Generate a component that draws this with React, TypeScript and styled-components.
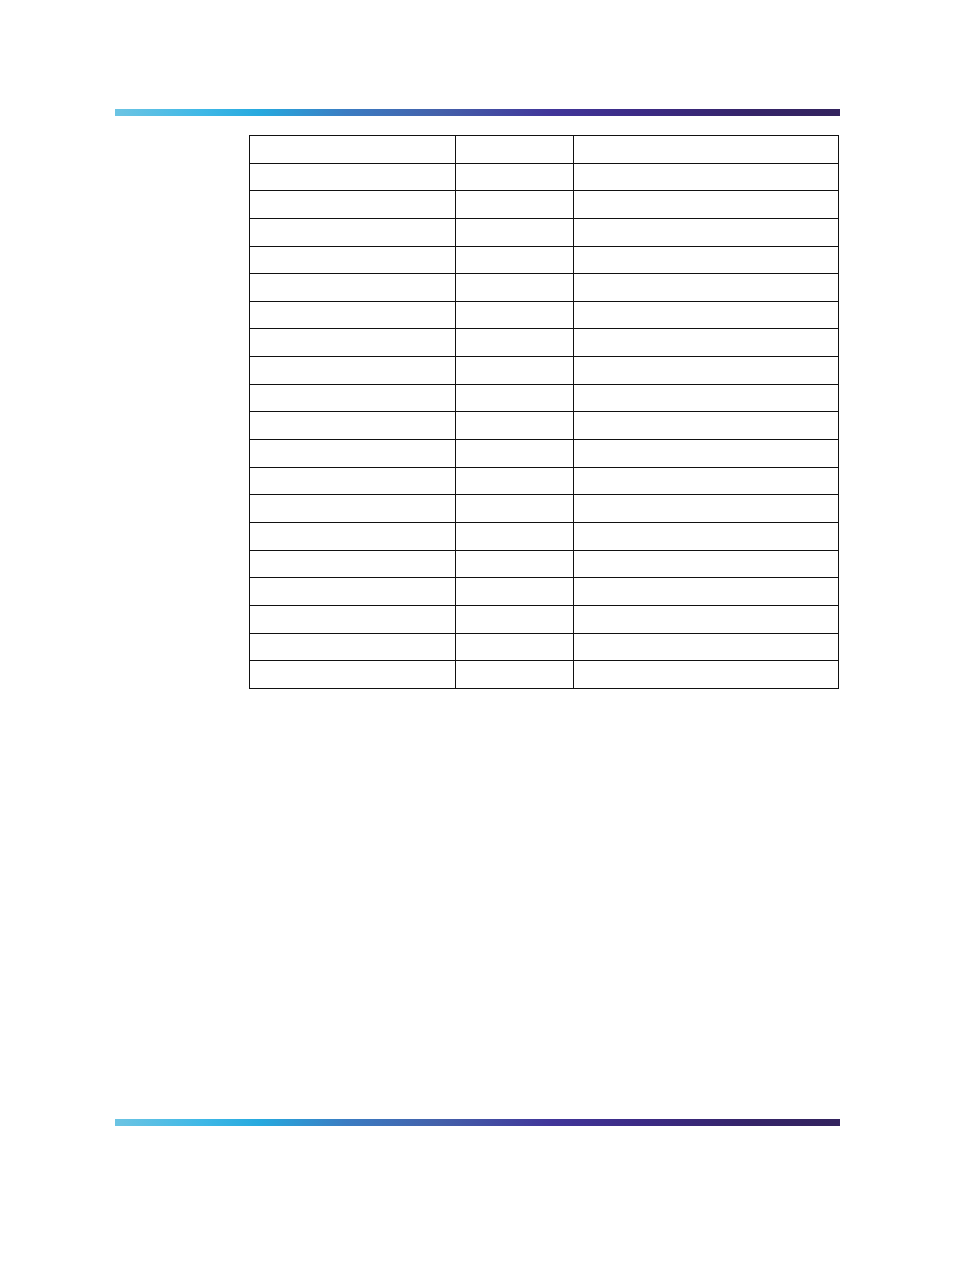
import React from 'react';
import styled, { createGlobalStyle } from 'styled-components';

const GlobalStyle = createGlobalStyle`
	html, body {
		margin: 0;
		padding: 0;
		background: #ffffff;
		font-family: "Liberation Sans", Arial, sans-serif;
	}
`;

const Page = styled.div`
	width: 954px;
	height: 1272px;
	padding: 109px 114px 0 115px;
	box-sizing: border-box;
	display: flex;
	flex-direction: column;
`;

const Rule = styled.div<{ $top: number }>`
	height: 7px;
	width: 725px;
	margin-top: ${(p) => p.$top}px;
	background: linear-gradient(
		90deg,
		#6cc4e3 0%,
		#3fb8e6 12%,
		#27a9de 20%,
		#3b7cc2 32%,
		#4460aa 45%,
		#41369a 60%,
		#3c2b86 72%,
		#352468 88%,
		#33235e 100%
	);
`;

const Table = styled.table`
	border-collapse: collapse;
	margin: 19px 0 0 134px;
	width: 589px;
	table-layout: fixed;
`;

const Cell = styled.td<{ $w: number }>`
	width: ${(p) => p.$w}px;
	height: 27.65px;
	padding: 0;
	border: 1.3px solid #111111;
	box-sizing: border-box;
`;

const widths = [206, 118, 265];
const rows = Array.from({ length: 20 }, (_, i) => i);

const App = () => {
	return (
		<>
			<GlobalStyle />
			<Page>
				<Rule $top={0} />
				<Table>
					<tbody>
						{rows.map((r) => (
							<tr key={r}>
								{widths.map((w, i) => (
									<Cell key={i} $w={w} />
								))}
							</tr>
						))}
					</tbody>
				</Table>
				<Rule $top={430} />
			</Page>
		</>
	);
};

export default App;
